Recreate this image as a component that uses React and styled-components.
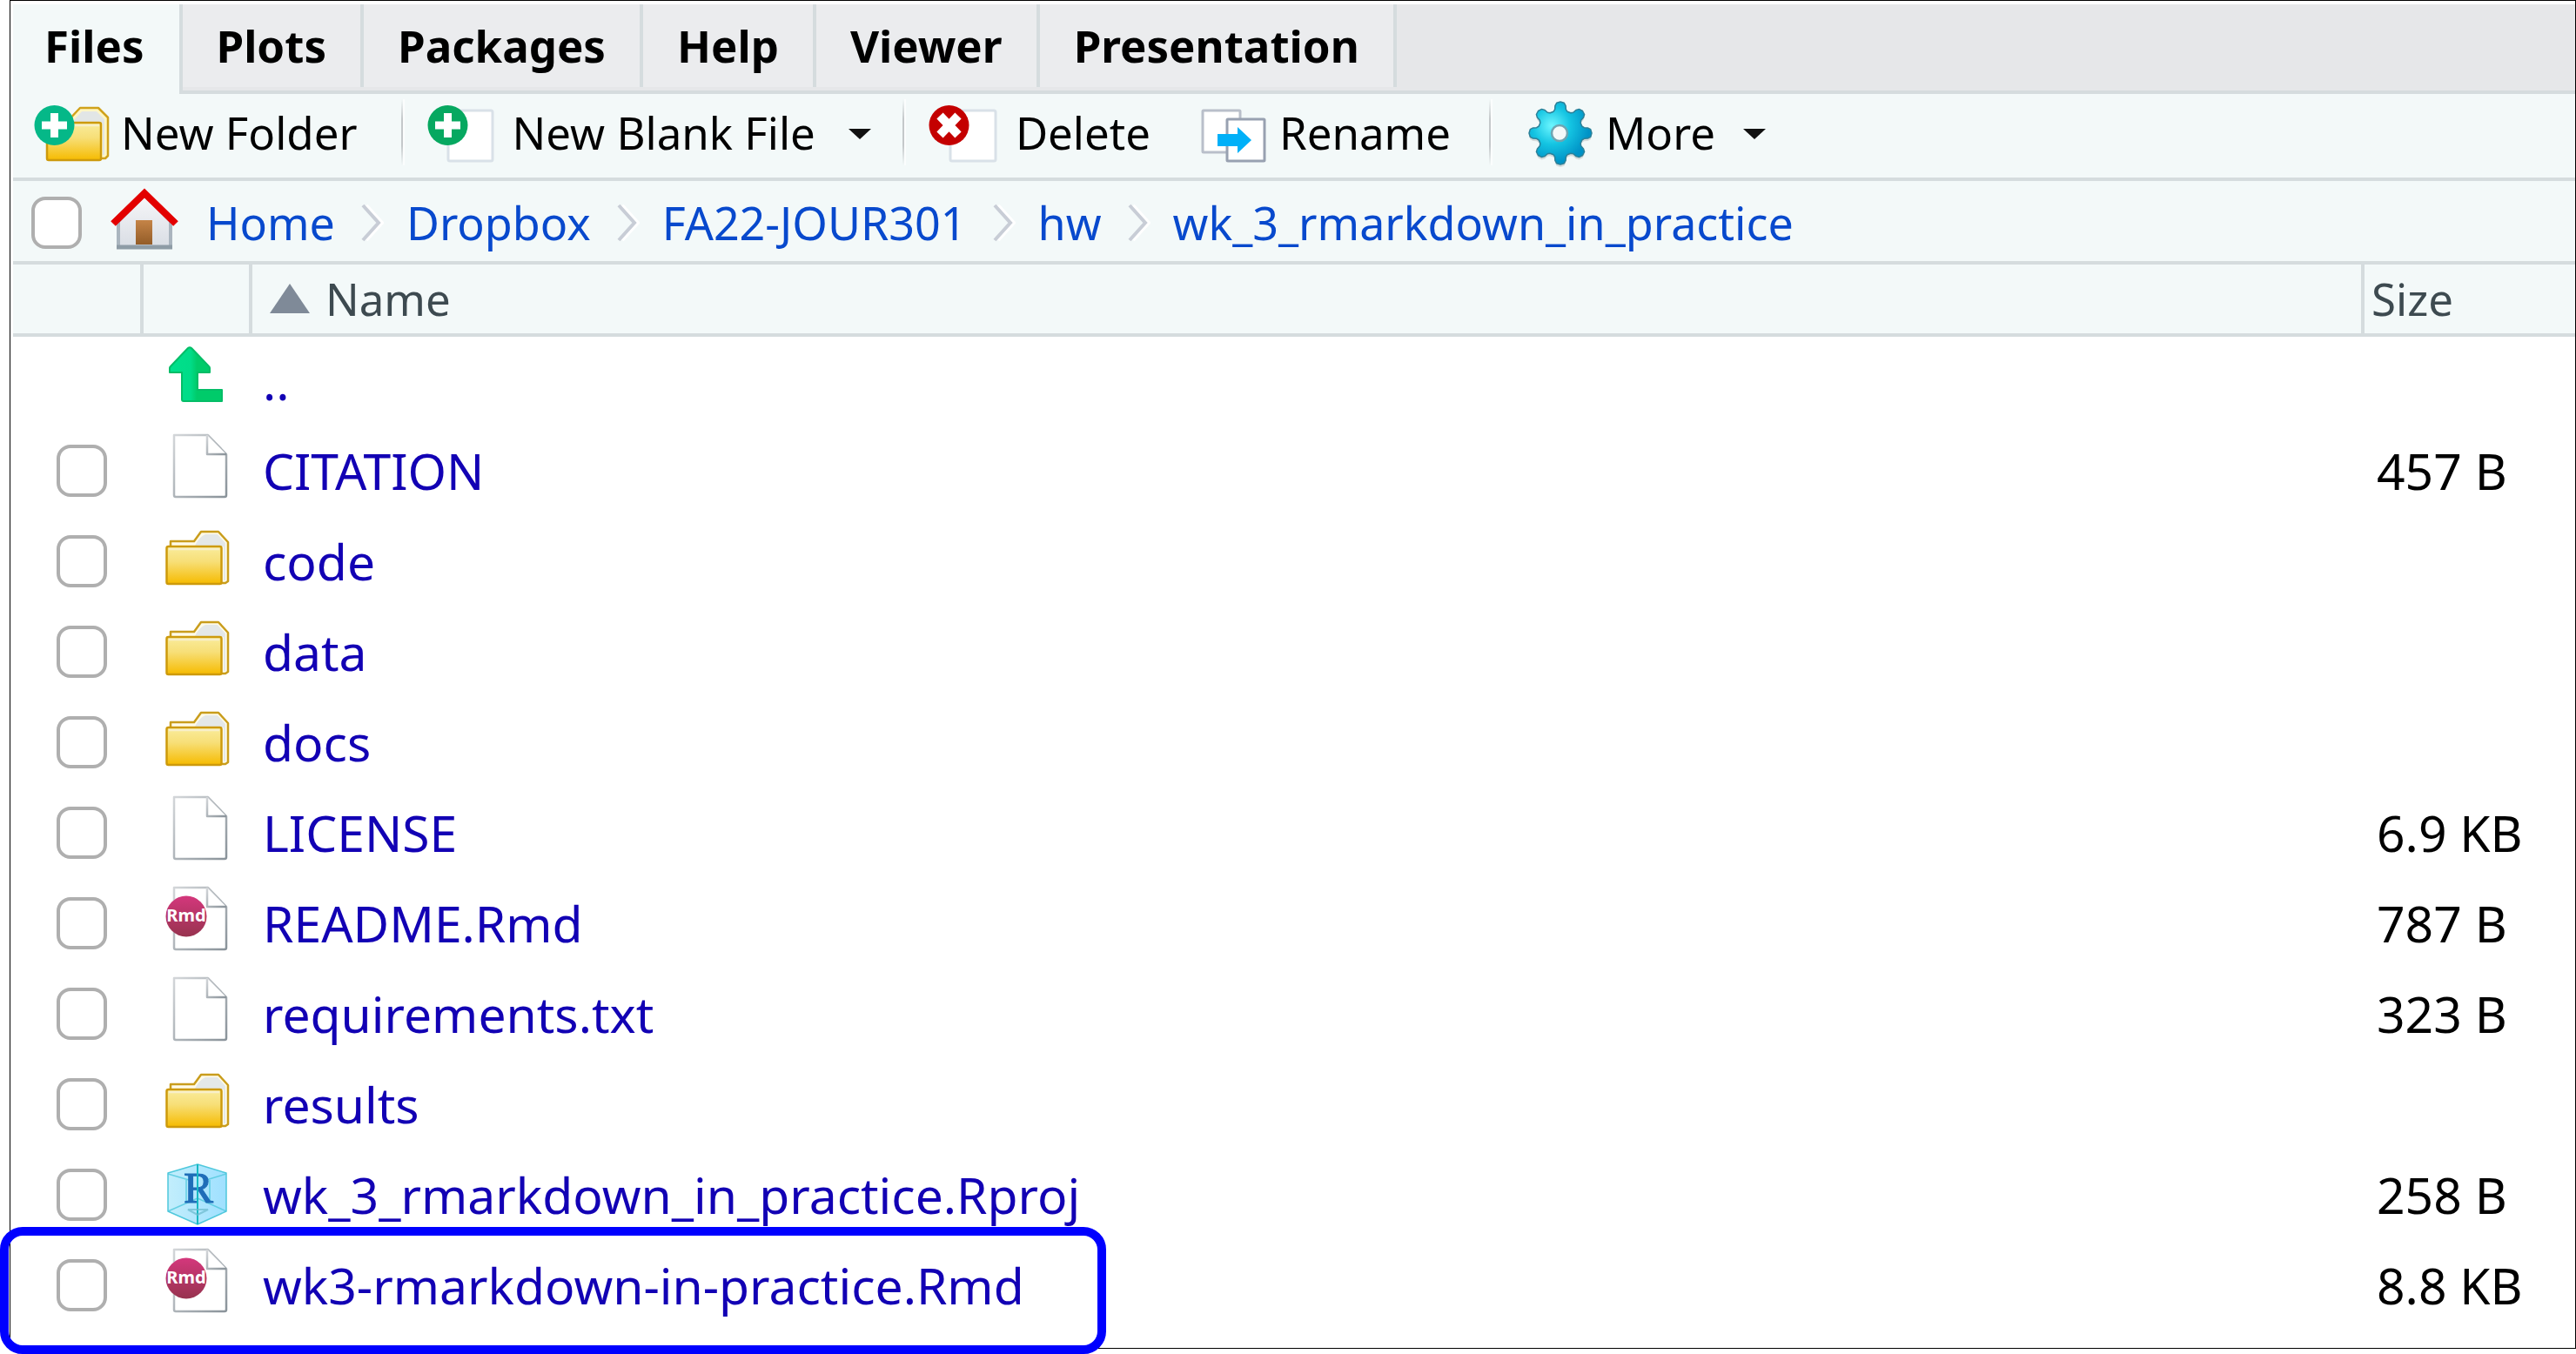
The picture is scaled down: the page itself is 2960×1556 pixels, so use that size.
import React from 'react';
import styled, { createGlobalStyle, css } from 'styled-components';

const color = {
  panel: '#f3f9f9',
  strip: '#e6e7e9',
  tab: '#ebecee',
  line: '#d5dcde',
  ink: '#000000',
  muted: '#3d4a50',
  link: '#0849cd',
  file: '#1200b4',
  box: '#afafaf',
  mark: '#0000ff',
};

const GlobalStyle = createGlobalStyle`
  *, *::before, *::after { box-sizing: border-box; }
  body {
    margin: 0;
    background: #fff;
    color: ${color.ink};
    font-family: "Noto Sans", "Open Sans", sans-serif;
    font-size: 51px;
    line-height: 72px;
  }
`;

const Frame = styled.main`
  position: relative;
  margin: 0 0 6px 11px;
  padding: 4px 0 20px 3px;
  border: 1px solid #000;
  background: #fff;
`;

const Tabs = styled.div`
  display: flex;
  height: 103px;
  background: ${color.strip};
  box-shadow: inset 0 -4px ${color.line};
`;

const Tab = styled.button`
  height: 95px;
  padding: 0 39px 2px;
  border: 0;
  border-right: 4px solid ${color.line};
  background: ${color.tab};
  color: ${color.ink};
  font: 700 51px/72px "Noto Sans", "Open Sans", sans-serif;
  white-space: nowrap;
  ${(p) => p.$active && css`
    height: 103px;
    padding: 0 40px 10px 36px;
    background: ${color.panel};
  `}
`;

const Toolbar = styled.div`
  display: flex;
  align-items: center;
  height: 100px;
  padding: 0 24px 8px;
  border-bottom: 4px solid ${color.line};
  background: ${color.panel};
`;

const ToolButton = styled.button`
  display: flex;
  align-items: center;
  gap: ${(p) => p.$gap || 14}px;
  padding: 0;
  border: 0;
  background: none;
  color: ${color.ink};
  font: 400 51px/72px "Noto Sans", "Open Sans", sans-serif;
  white-space: nowrap;
`;

const Caret = styled.span`
  margin: 4px 0 0 18px;
  border: 13px solid transparent;
  border-top: 12px solid #111;
  border-bottom: 0;
`;

const Divider = styled.span`
  width: 4px;
  height: 76px;
  margin: 0 ${(p) => p.$after || 26}px 0 ${(p) => p.$before || 44}px;
  background: linear-gradient(#f3f9f9, #c4c8ca 30%, #c4c8ca 70%, #f3f9f9);
  border-right: 2px solid #fbfdfd;
`;

const Space = styled.span`
  width: 58px;
`;

const Crumbs = styled.nav`
  display: flex;
  align-items: center;
  height: 96px;
  padding: 4px 20px 0 21px;
  border-bottom: 4px solid ${color.line};
  background: ${color.panel};
  font-size: 52px;
`;

const Check = styled.input`
  appearance: none;
  display: block;
  width: 58px;
  height: 60px;
  margin: 0;
  border: 4px solid ${color.box};
  border-radius: 16px;
  background: #fff;
`;

const HomeIconBox = styled.span`
  display: flex;
  margin: 0 30px 0 33px;
`;

const Crumb = styled.a`
  color: ${color.link};
  text-decoration: none;
  white-space: nowrap;
`;

const Chevron = styled.svg`
  flex: none;
  margin: 0 26px 0 30px;
`;

const Table = styled.table`
  width: 100%;
  table-layout: fixed;
  border-collapse: separate;
  border-spacing: 0;
`;

const Col = styled.col`
  width: ${(p) => p.$w};
`;

const Head = styled.th`
  height: 83px;
  padding: 0 0 2px ${(p) => p.$pad || 0}px;
  border-bottom: 4px solid ${color.line};
  border-right: ${(p) => (p.$last ? 0 : 4)}px solid ${color.line};
  background: ${color.panel};
  color: ${color.muted};
  font-weight: 400;
  text-align: left;
`;

const SortLabel = styled.span`
  display: flex;
  align-items: center;
  gap: 18px;
`;

const SortMark = styled.span`
  border: 23px solid transparent;
  border-bottom: 34px solid #7f8a98;
  border-top: 0;
`;

const Row = styled.tr`
  height: ${(p) => (p.$first ? 102 : 104)}px;
`;

const Cell = styled.td`
  padding: 0 0 0 ${(p) => p.$pad || 0}px;
  vertical-align: middle;
  font-size: 57px;
  white-space: nowrap;
`;

const IconCell = styled(Cell)`
  padding: 8px 0 0 25px;
  vertical-align: top;

  svg { display: block; }
`;

const FileLink = styled.a`
  color: ${color.file};
  text-decoration: none;
`;

const Highlight = styled.div`
  position: absolute;
  left: -12px;
  bottom: -7px;
  width: 1271px;
  height: 146px;
  border: 10px solid ${color.mark};
  border-radius: 26px;
  pointer-events: none;
`;

const HiddenDefs = styled.svg`
  position: absolute;
`;

const Defs = () => (
  <HiddenDefs width="0" height="0" aria-hidden="true">
    <defs>
      <linearGradient id="gold" x1="0" y1="0" x2="0" y2="1">
        <stop offset="0" stopColor="#f9ec9c" />
        <stop offset="0.4" stopColor="#f7df78" />
        <stop offset="1" stopColor="#f6bb00" />
      </linearGradient>
      <linearGradient id="edge" x1="0" y1="0" x2="1" y2="1">
        <stop offset="0" stopColor="#d3d6d9" />
        <stop offset="1" stopColor="#8a939a" />
      </linearGradient>
      <linearGradient id="arrow" x1="0" x2="1">
        <stop offset="0" stopColor="#00e08c" />
        <stop offset="0.4" stopColor="#00dc88" />
        <stop offset="0.52" stopColor="#00cb6a" />
        <stop offset="1" stopColor="#00cb6a" />
      </linearGradient>
      <linearGradient id="rose" x1="0" y1="0" x2="0" y2="1">
        <stop offset="0" stopColor="#d4377c" />
        <stop offset="1" stopColor="#97334f" />
      </linearGradient>
      <linearGradient id="ice" x1="0" x2="1">
        <stop offset="0" stopColor="#c2eefc" />
        <stop offset="1" stopColor="#9fe0ff" />
      </linearGradient>
      <linearGradient id="wall" x1="0" y1="0" x2="0" y2="1">
        <stop offset="0" stopColor="#f7f7f9" />
        <stop offset="1" stopColor="#d9dde4" />
      </linearGradient>
      <linearGradient id="door" x1="0" y1="0" x2="0" y2="1">
        <stop offset="0" stopColor="#c58447" />
        <stop offset="1" stopColor="#935c28" />
      </linearGradient>
      <radialGradient id="gear" cx="0.36" cy="0.38" r="0.6">
        <stop offset="0" stopColor="#6cf6ff" />
        <stop offset="0.5" stopColor="#14c4e2" />
        <stop offset="1" stopColor="#0092c6" />
      </radialGradient>
    </defs>
  </HiddenDefs>
);

const FolderIcon = () => (
  <svg width="76" height="80" viewBox="0 0 76 80" aria-hidden="true">
    <g strokeLinejoin="round" strokeWidth="2.5">
      <path d="M6 32V21H33L41 10H61L72 22V67L69 69H60Z" fill="#fffbe8" stroke="#c99d1c" />
      <path d="M34 26C37 20 41 15 46 13H60L69 23V66H67V27Z" fill="#e4e8e8" />
      <rect x="1.500" y="27" width="63" height="43" rx="2" fill="url(#gold)" stroke="#cd9a0c" />
      <path d="M4 30H62" stroke="#f8efc8" fill="none" />
    </g>
  </svg>
);

const Page = () => (
  <g fill="#fff" stroke="url(#edge)" strokeWidth="2.5" strokeLinejoin="round">
    <path d="M10 3H49L70 25V72Q70 74 68 74H12Q10 74 10 72Z" />
    <path d="M48 3V25H70" />
  </g>
);

const FileIcon = () => (
  <svg width="76" height="80" viewBox="0 0 76 80" aria-hidden="true"><Page /></svg>
);

const RmdIcon = () => (
  <svg width="76" height="80" viewBox="0 0 76 80" aria-hidden="true">
    <Page />
    <circle cx="24" cy="36" r="23.500" fill="url(#rose)" />
    <text x="24" y="42" textAnchor="middle" fontFamily="Noto Sans, sans-serif" fontWeight="700" fontSize="20" fill="#fff">Rmd</text>
  </svg>
);

const UpIcon = () => (
  <svg width="76" height="80" viewBox="0 0 76 80" aria-hidden="true">
    <path d="M30 5L50 26Q51 27 51 28V33H37V53H65V66H21Q19 66 19 64V33H5V28Q5 27 6 26L26 5Q28 3.500 30 5Z" fill="url(#arrow)" stroke="#04bd67" strokeWidth="2" strokeLinejoin="round" />
  </svg>
);

const ProjectIcon = () => (
  <svg width="76" height="80" viewBox="0 0 76 80" aria-hidden="true">
    <g stroke="#4fc8dc" strokeWidth="1.500" strokeLinejoin="round" fill="none">
      <path d="M37 9L70 19V63L37 78L3 63V19Z" fill="url(#ice)" />
      <path d="M3 20L27 27M47 27L70 20M3 63L37 48L70 63M24 27V52M51 27V52" opacity="0.8" />
    </g>
    <text x="38" y="53" textAnchor="middle" fontFamily="Liberation Serif, serif" fontSize="51" fill="#1f6db8" stroke="#1f6db8" strokeWidth="1">R</text>
    <path d="M37 9V78" stroke="#16b9c2" strokeWidth="2" />
    <path d="M26 61H49L37 67Z" fill="none" stroke="#6bb9cc" strokeWidth="2" opacity="0.7" />
  </svg>
);

const Plus = ({ fill }) => (
  <g>
    <circle cx="23.500" cy="28" r="23" fill={fill} />
    <path d="M23.500 14V42M9 28H38" stroke="#fff" strokeWidth="9" />
  </g>
);

const NewFolderIcon = () => (
  <svg width="88" height="72" viewBox="0 0 88 72" aria-hidden="true">
    <g strokeLinejoin="round" strokeWidth="2.500">
      <path d="M36 26L53 8H74L85 19V63L82 66H70Z" fill="#fff6c4" stroke="#d0a21c" />
      <path d="M44 24L55 12H72L81 21V62H79V26Z" fill="#e2e6e6" />
      <rect x="15" y="25" width="62" height="43" rx="2" fill="url(#gold)" stroke="#cd9a0c" />
      <path d="M17 28H75" stroke="#f8efc8" />
    </g>
    <Plus fill="#05b888" />
  </svg>
);

const NewFileIcon = () => (
  <svg width="78" height="72" viewBox="0 0 78 72" aria-hidden="true">
    <rect x="24" y="11" width="51" height="58" rx="2" fill="#fff" stroke="#d9e1e8" strokeWidth="3" />
    <Plus fill="#06a860" />
  </svg>
);

const DeleteIcon = () => (
  <svg width="80" height="72" viewBox="0 0 80 72" aria-hidden="true">
    <rect x="25" y="11" width="52" height="58" rx="2" fill="#fff" stroke="#d9e1e8" strokeWidth="3" />
    <circle cx="23.500" cy="28" r="23" fill="#c40000" />
    <path d="M13 17L34 39M34 17L13 39" stroke="#fff" strokeWidth="10" />
  </svg>
);

const RenameIcon = () => (
  <svg width="76" height="72" viewBox="0 0 76 72" aria-hidden="true">
    <rect x="2" y="11" width="43" height="48" rx="1" fill="#fff" stroke="#b9bfca" strokeWidth="3" />
    <rect x="30" y="21" width="43" height="48" rx="1" fill="#fff" stroke="#98a1b1" strokeWidth="3" />
    <path d="M19 38H42V30L58 45L42 60V52H19Z" fill="#00b0f8" />
  </svg>
);

const gearPath = () => {
  const pts = [];
  for (let i = 0; i < 8; i += 1) {
    [[-18, 26], [-13, 28], [-11, 32], [-7, 35], [0, 36], [7, 35], [11, 32], [13, 28], [18, 26]].forEach(([a, r]) => {
      const t = ((i * 45 + a - 90) * Math.PI) / 180;
      pts.push(`${(38 + r * Math.cos(t)).toFixed(1)} ${(41 + r * Math.sin(t)).toFixed(1)}`);
    });
  }
  return `M${pts.join('L')}Z`;
};

const GearIcon = () => (
  <svg width="76" height="80" viewBox="0 0 76 80" aria-hidden="true">
    <path d={gearPath()} transform="translate(0 3)" fill="#000" opacity="0.12" />
    <path d={gearPath()} fill="url(#gear)" stroke="#2c8098" strokeWidth="1.500" strokeLinejoin="round" />
    <circle cx="37" cy="41" r="9" fill="#f3f9f9" stroke="#6fa5b2" strokeWidth="2.500" />
  </svg>
);

const HouseIcon = () => (
  <svg width="80" height="80" viewBox="0 0 80 80" aria-hidden="true">
    <path d="M9 38L39 8L69 38V68H9Z" fill="url(#wall)" stroke="#aab5bf" strokeWidth="4" />
    <path d="M7 68H71" stroke="#8e9ca6" strokeWidth="5" />
    <rect x="29" y="37" width="19" height="28" fill="url(#door)" />
    <path d="M3 41L39 6L75 41" fill="none" stroke="#e30000" strokeWidth="8" />
  </svg>
);

const CrumbChevron = () => (
  <Chevron width="26" height="44" viewBox="0 0 26 44" aria-hidden="true">
    <path d="M2 2L20 22L2 42" fill="none" stroke="#fff" strokeWidth="4" transform="translate(4 0)" />
    <path d="M2 2L20 22L2 42" fill="none" stroke="#c8cdd6" strokeWidth="4" />
  </Chevron>
);

const tabs = ['Files', 'Plots', 'Packages', 'Help', 'Viewer', 'Presentation'];
const crumbs = ['Home', 'Dropbox', 'FA22-JOUR301', 'hw', 'wk_3_rmarkdown_in_practice'];
const icons = { up: UpIcon, file: FileIcon, folder: FolderIcon, rmd: RmdIcon, project: ProjectIcon };
const files = [
  { name: '..', kind: 'up' },
  { name: 'CITATION', kind: 'file', size: '457 B' },
  { name: 'code', kind: 'folder' },
  { name: 'data', kind: 'folder' },
  { name: 'docs', kind: 'folder' },
  { name: 'LICENSE', kind: 'file', size: '6.9 KB' },
  { name: 'README.Rmd', kind: 'rmd', size: '787 B' },
  { name: 'requirements.txt', kind: 'file', size: '323 B' },
  { name: 'results', kind: 'folder' },
  { name: 'wk_3_rmarkdown_in_practice.Rproj', kind: 'project', size: '258 B' },
  { name: 'wk3-rmarkdown-in-practice.Rmd', kind: 'rmd', size: '8.8 KB' },
];

export default function App() {
  return (
    <>
      <GlobalStyle />
      <Defs />
      <Frame>
        <Tabs role="tablist">
          {tabs.map((t, i) => (
            <Tab key={t} type="button" role="tab" aria-selected={i === 0} $active={i === 0}>{t}</Tab>
          ))}
        </Tabs>
        <Toolbar>
          <ToolButton type="button" $gap={12}><NewFolderIcon />New Folder</ToolButton>
          <Divider $before={50} />
          <ToolButton type="button" $gap={20}><NewFileIcon />New Blank File<Caret /></ToolButton>
          <Divider $before={36} />
          <ToolButton type="button" $gap={20}><DeleteIcon />Delete</ToolButton>
          <Space />
          <ToolButton type="button"><RenameIcon />Rename</ToolButton>
          <Divider $after={40} />
          <ToolButton type="button"><GearIcon />More<Caret /></ToolButton>
        </Toolbar>
        <Crumbs aria-label="Path">
          <Check type="checkbox" aria-label="Select all" />
          <HomeIconBox><HouseIcon /></HomeIconBox>
          {crumbs.map((c, i) => (
            <React.Fragment key={c}>
              {i > 0 && <CrumbChevron />}
              <Crumb href="#">{c}</Crumb>
            </React.Fragment>
          ))}
        </Crumbs>
        <Table>
          <colgroup>
            <Col $w="150px" />
            <Col $w="125px" />
            <Col $w="auto" />
            <Col $w="242px" />
          </colgroup>
          <thead>
            <tr>
              <Head aria-label="Selected" />
              <Head aria-label="Type" />
              <Head $pad={20}><SortLabel><SortMark />Name</SortLabel></Head>
              <Head $pad={8} $last>Size</Head>
            </tr>
          </thead>
          <tbody>
            {files.map((f) => {
              const Icon = icons[f.kind];
              return (
                <Row key={f.name} $first={f.kind === 'up'}>
                  <Cell $pad={50}>
                    {f.kind !== 'up' && <Check type="checkbox" aria-label={`Select ${f.name}`} />}
                  </Cell>
                  <IconCell><Icon /></IconCell>
                  <Cell $pad={12}><FileLink href="#">{f.name}</FileLink></Cell>
                  <Cell $pad={14}>{f.size}</Cell>
                </Row>
              );
            })}
          </tbody>
        </Table>
        <Highlight />
      </Frame>
    </>
  );
}
